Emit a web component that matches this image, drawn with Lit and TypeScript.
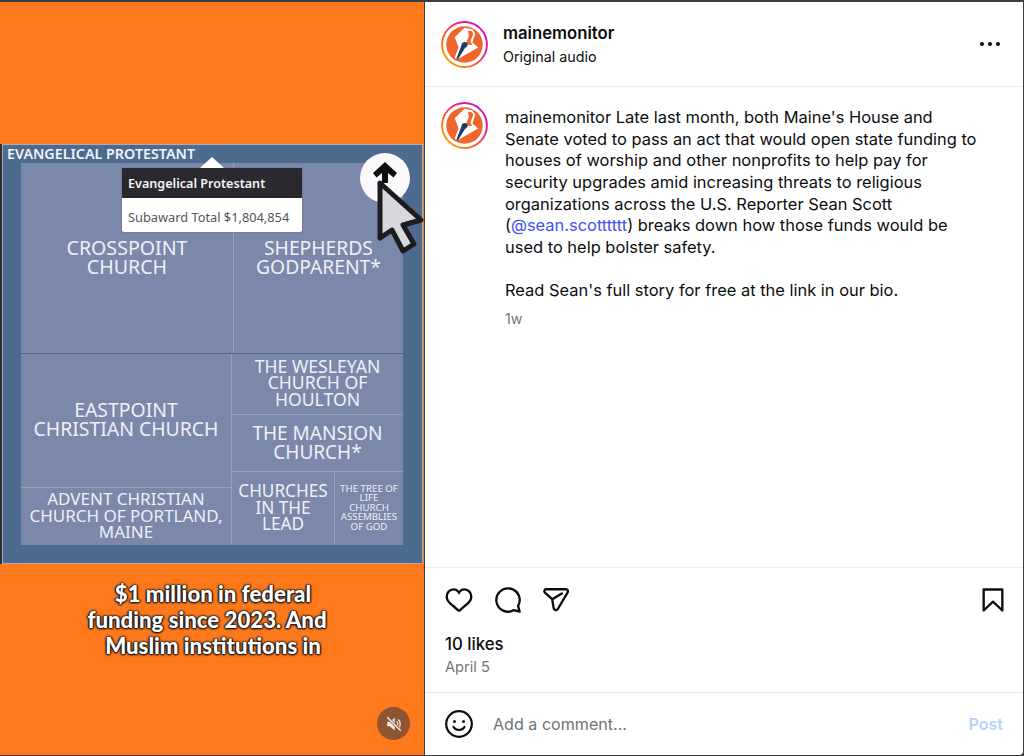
import { LitElement, html, css, svg } from "lit";
import { customElement } from "lit/decorators.js";

const avatar = (id: string) => svg`
<svg class="avatar" viewBox="0 0 48 48">
  <defs><linearGradient id=${id} x1="0" y1="1" x2="1" y2="0">
    <stop offset="0" stop-color="#ffb000"/><stop offset=".35" stop-color="#fb6a20"/><stop offset=".7" stop-color="#e8189a"/><stop offset="1" stop-color="#c913c9"/>
  </linearGradient></defs>
  <circle cx="24" cy="24" r="22.9" fill="#fff" stroke="url(#${id})" stroke-width="2"/>
  <circle cx="24" cy="24" r="18.6" fill="#f1652d"/>
  <path d="M14 16.500L24 7L32 8.500L35 13L32 22L38 27L16 39.500L14 37L18 27Z" fill="#fff"/>
  <path d="M27.500 10L31.500 10.500L33 13L30 21L32 24.500L25 24L28.500 15Z" fill="#f1652d"/>
  <path d="M15.500 39L21 24.500C21 21.500 25 20.500 26.500 22.500C28 24.500 27 26.500 24.500 27.500L17 39.500Z" fill="#1f3a66"/>
</svg>`;

@customElement("app-root")
export class AppRoot extends LitElement {
  static styles = css`
    :host { display: block; width: 1024px; height: 756px; background: #3b3d40; overflow: hidden; position: relative; }
    .frame { display: flex; height: 753px; padding-top: 2px; }
    .video { width: 424px; flex: none; background: #fe781c; position: relative; display: flex; flex-direction: column; }
    .spacer { height: 142px; flex: none; }
    .chart { margin-left: 2px; width: 421px; height: 420px; flex: none; border: 1px solid #a6afbd; background: #4d6a8f; position: relative; padding: 18px 19px 18px 18px; box-sizing: border-box; font-family: "Noto Sans", sans-serif; color: #eef0f5; display: flex; flex-direction: column; box-shadow: -2px 0 0 #33302a; }
    .chart-title { position: absolute; left: 4px; top: 0; font-size: 14.3px; font-weight: 600; color: #f0f3f7; line-height: 17px; white-space: nowrap; }
    .row { display: flex; flex: none; }
    .col { display: flex; flex-direction: column; flex: none; }
    .cell { background: #7a88a9; display: flex; align-items: center; justify-content: center; text-align: center; flex: none; box-sizing: border-box; white-space: nowrap; }
    .top { height: 190px; gap: 1px; background: #96a2bc; margin-bottom: 1px; }
    .bottom { height: 191px; gap: 1px; background: #96a2bc; }
    .left { width: 210px; gap: 1px; background: #96a2bc; }
    .right { width: 171px; gap: 1px; background: #96a2bc; }
    .c1 { width: 212px; height: 190px; font-size: 19.6px; line-height: 19px; padding-bottom: 2px; }
    .c2 { width: 169px; height: 190px; font-size: 19.3px; line-height: 19px; padding-bottom: 2px; }
    .c3 { height: 133px; font-size: 19.4px; line-height: 19px; padding-bottom: 4px; }
    .c4 { height: 57px; font-size: 17px; line-height: 16.5px; padding-bottom: 1px; }
    .c5 { height: 60px; font-size: 17.6px; line-height: 16.3px; padding-bottom: 3px; }
    .c6 { height: 56px; font-size: 19px; line-height: 18.5px; padding-bottom: 1px; }
    .c7row { gap: 1px; height: 73px; background: #96a2bc; }
    .c7 { width: 102px; font-size: 17.2px; line-height: 16.8px; padding-bottom: 1px; }
    .c8 { width: 68px; font-size: 9.7px; line-height: 9.5px; padding-bottom: 2px; }
    .tooltip { position: absolute; left: 119px; top: 23px; width: 180px; height: 64px; background: #fff; border-radius: 2px; font-family: "Noto Sans", sans-serif; box-shadow: 0 0 2px rgba(0,0,0,.25); }
    .tooltip::before { content: ""; position: absolute; left: 78px; top: -11px; border-left: 12px solid transparent; border-right: 12px solid transparent; border-bottom: 11px solid #fff; }
    .tip-head { height: 30px; background: #2b2930; color: #f4f4f5; font-size: 12.6px; font-weight: 600; line-height: 31px; padding-left: 6px; }
    .tip-body { height: 34px; color: #55565c; font-size: 12.8px; line-height: 38px; padding-left: 6px; white-space: nowrap; }
    .cursor { position: absolute; left: 351px; top: 8px; width: 72px; height: 102px; overflow: visible; }
    .caption { margin-top: 17px; padding-left: 2px; text-align: center; font-family: Lato, sans-serif; font-weight: 900; font-size: 22.2px; line-height: 26px; color: #fff; text-shadow: 0 0 2px #111, 0 1px 2px #111, 0 0 3px #222, 1px 0 1px #222, -1px 0 1px #222; }
    .caption .wide { padding-right: 12px; }
    .mute { position: absolute; left: 377px; top: 705px; width: 33px; height: 33px; border-radius: 50%; background: #8f5533; display: flex; align-items: center; justify-content: center; }
    .mute svg { width: 18px; height: 18px; }
    .panel { width: 598px; margin-left: 1px; flex: none; background: #fff; font-family: Inter, "Liberation Sans", sans-serif; color: #0c0d10; display: flex; flex-direction: column; border-radius: 0 0 4px 0; }
    .head { height: 85px; flex: none; display: flex; align-items: center; padding: 0 23px 0 16px; box-sizing: border-box; border-bottom: 1px solid #eeeef0; }
    .avatar { width: 47px; height: 47px; flex: none; display: block; }
    .who { margin-left: 15px; flex: 1; margin-top: 1px; }
    .name { font-size: 16.7px; font-weight: 600; line-height: 22px; }
    .sub { font-size: 14.3px; line-height: 22px; margin-top: 2px; }
    .dots { display: flex; gap: 4px; }
    .dots i { width: 4px; height: 4px; border-radius: 50%; background: #0c0d10; display: block; }
    .body { flex: 1; display: flex; padding: 15px 16px 0 16px; min-height: 0; }
    .text { margin-left: 17px; margin-top: 5px; width: 500px; font-size: 16.44px; line-height: 21.66px; white-space: nowrap; }
    .text a { color: #4150f7; text-decoration: none; }
    .para { margin-bottom: 21.66px; }
    .age { font-size: 14.3px; color: #737373; line-height: 20px; margin-top: -15px; }
    .actions { height: 125px; flex: none; border-top: 1px solid #eeeef0; box-sizing: border-box; padding: 16px 16px 0 20px; }
    .icons { display: flex; align-items: center; height: 32px; gap: 21px; }
    .icons svg { width: 28px; height: 28px; display: block; flex: none; }
    .icons .send { margin-left: -1px; }
    .icons .book { margin-left: auto; }
    .likes { font-size: 16.8px; font-weight: 500; line-height: 22px; margin-top: 17px; }
    .date { font-size: 14.6px; color: #737373; line-height: 20px; margin-top: 2px; }
    .comment { height: 63px; flex: none; border-top: 1px solid #e6e6ea; box-sizing: border-box; display: flex; align-items: center; padding: 0 20px 0 20px; }
    .comment svg { width: 28px; height: 28px; flex: none; }
    .ph { flex: 1; margin-left: 20px; font-size: 16.1px; color: #737373; }
    .post { font-size: 16px; font-weight: 600; color: #b6d2fb; }
  `;

  render() {
    return html`<div class="frame">
      <div class="video">
        <div class="spacer"></div>
        <div class="chart">
          <div class="chart-title">EVANGELICAL PROTESTANT</div>
          <div class="row top">
            <div class="cell c1">CROSSPOINT<br />CHURCH</div>
            <div class="cell c2">SHEPHERDS<br />GODPARENT*</div>
          </div>
          <div class="row bottom">
            <div class="col left">
              <div class="cell c3">EASTPOINT<br />CHRISTIAN CHURCH</div>
              <div class="cell c4">ADVENT CHRISTIAN<br />CHURCH OF PORTLAND,<br />MAINE</div>
            </div>
            <div class="col right">
              <div class="cell c5">THE WESLEYAN<br />CHURCH OF<br />HOULTON</div>
              <div class="cell c6">THE MANSION<br />CHURCH*</div>
              <div class="row c7row">
                <div class="cell c7">CHURCHES<br />IN THE<br />LEAD</div>
                <div class="cell c8">THE TREE OF<br />LIFE<br />CHURCH<br />ASSEMBLIES<br />OF GOD</div>
              </div>
            </div>
          </div>
          <div class="tooltip">
            <div class="tip-head">Evangelical Protestant</div>
            <div class="tip-body">Subaward Total $1,804,854</div>
          </div>
          <svg class="cursor" viewBox="0 0 72 102">
            <circle cx="31" cy="25" r="25" fill="#fafafc"/>
            <path d="M31 9L43 20L39.500 24.500L34 20V30H28V20L22.500 24.500L19 20Z" fill="#0e0e10"/>
            <path d="M26 30L67 67L49 72L60 91L49 98L38 77L26 85Z" fill="#d8d8dc" stroke="#1c1c20" stroke-width="5" stroke-linejoin="round"/>
          </svg>
        </div>
        <div class="caption">$1 million in federal<br /><span class="wide">funding since 2023. And</span><br />Muslim institutions in</div>
        <div class="mute">
          <svg viewBox="0 0 24 24" fill="none">
            <path d="M3 9h3.500L13 3.500v17L6.500 15H3Z" fill="#f4ece6"/>
            <path d="M15.500 8.500a5 5 0 0 1 0 7M18 6a9 9 0 0 1 0 12" stroke="#f4ece6" stroke-width="1.600"/>
            <path d="M3 3l18 18" stroke="#8f5533" stroke-width="4"/>
            <path d="M3 3l18 18" stroke="#f4ece6" stroke-width="1.800"/>
          </svg>
        </div>
      </div>
      <div class="panel">
        <div class="head">
          ${avatar("g1")}
          <div class="who">
            <div class="name">mainemonitor</div>
            <div class="sub">Original audio</div>
          </div>
          <div class="dots"><i></i><i></i><i></i></div>
        </div>
        <div class="body">
          ${avatar("g2")}
          <div class="text">
            <div class="para">mainemonitor Late last month, both Maine's House and<br />Senate voted to pass an act that would open state funding to<br />houses of worship and other nonprofits to help pay for<br />security upgrades amid increasing threats to religious<br />organizations across the U.S. Reporter Sean Scott<br />(<a>@sean.scotttttt</a>) breaks down how those funds would be<br />used to help bolster safety.</div>
            <div class="para">Read Sean's full story for free at the link in our bio.</div>
            <div class="age">1w</div>
          </div>
        </div>
        <div class="actions">
          <div class="icons">
            <svg viewBox="0 0 24 24" fill="#0c0d10"><path d="M16.792 3.904A4.989 4.989 0 0 1 21.5 9.122c0 3.072-2.652 4.959-5.197 7.222-2.512 2.243-3.865 3.469-4.303 3.752-.477-.309-2.143-1.823-4.303-3.752C5.141 14.072 2.5 12.167 2.5 9.122a4.989 4.989 0 0 1 4.708-5.218 4.21 4.21 0 0 1 3.675 1.941c.84 1.175.98 1.763 1.12 1.763s.278-.588 1.11-1.766a4.17 4.17 0 0 1 3.679-1.938m0-2a6.04 6.04 0 0 0-4.797 2.127 6.052 6.052 0 0 0-4.787-2.127A6.985 6.985 0 0 0 .5 9.122c0 3.61 2.55 5.827 5.015 7.97.283.246.569.494.853.747l1.027.918a44.998 44.998 0 0 0 3.518 3.018 2 2 0 0 0 2.174 0 45.263 45.263 0 0 0 3.626-3.115l.922-.824c.293-.26.59-.519.885-.774 2.334-2.025 4.98-4.32 4.98-7.94a6.985 6.985 0 0 0-6.708-7.218Z"/></svg>
            <svg viewBox="0 0 24 24" fill="none" stroke="#0c0d10" stroke-width="2" stroke-linejoin="round"><path d="M20.656 17.008a9.993 9.993 0 1 0-3.59 3.615L22 22Z"/></svg>
            <svg class="send" viewBox="0 0 24 24" fill="none" stroke="#0c0d10" stroke-width="2" stroke-linejoin="round" stroke-linecap="round"><path d="M9.500 11L17 6.500"/><path d="M3.500 2.800H20.500C22 2.800 22.700 4.300 22 5.400L13.700 19.500C12.700 21.200 10.500 20.900 10 19L8.700 11.200L2.500 5.700C1.400 4.700 2.100 2.800 3.500 2.800Z"/></svg>
            <svg class="book" viewBox="0 0 24 24" fill="none" stroke="#0c0d10" stroke-width="2" stroke-linecap="round" stroke-linejoin="round"><polygon points="20 21 12 13.44 4 21 4 3 20 3 20 21"/></svg>
          </div>
          <div class="likes">10 likes</div>
          <div class="date">April 5</div>
        </div>
        <div class="comment">
          <svg viewBox="0 0 28 28" fill="none" stroke="#0c0d10" stroke-width="2.200"><circle cx="14" cy="14" r="12.800"/><circle cx="9.500" cy="11.500" r="1.500" fill="#0c0d10" stroke="none"/><circle cx="18.500" cy="11.500" r="1.500" fill="#0c0d10" stroke="none"/><path d="M8.500 17c1.200 2 3.200 3 5.500 3s4.300-1 5.500-3" stroke-linecap="round"/></svg>
          <div class="ph">Add a comment...</div>
          <div class="post">Post</div>
        </div>
      </div>
    </div>`;
  }
}
